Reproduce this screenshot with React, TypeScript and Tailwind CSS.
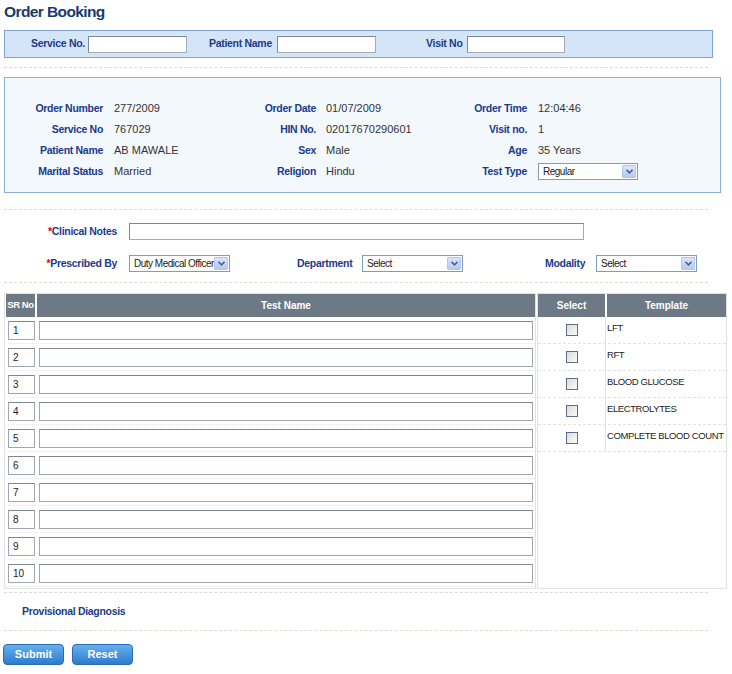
import React from 'react'

const label = "font-bold text-[10.5px] tracking-[-0.3px] text-[#1b3a8c] whitespace-nowrap"
const value = "text-[11px] text-[#333] whitespace-nowrap"

const TextBox = ({ w }: { w: string }) => (
  <div className={`${w} h-[17px] bg-white border border-[#a4acb3] border-t-[#7d8992] border-l-[#7d8992]`} />
)

// old xp style dropdown
const Dropdown = ({ w, text }: { w: string; text: string }) => (
  <div className={`${w} h-[17px] bg-white border border-[#7f9db9] flex items-center justify-between`}>
    <span className="pl-[4px] text-[10px] text-[#222] tracking-[-0.5px] whitespace-nowrap">{text}</span>
    <div className="shrink-0 w-[14px] h-[13px] mr-[1px] rounded-[1px] bg-gradient-to-b from-[#dbe6fd] to-[#b5c9f5] border border-[#b3c5ef] flex items-center justify-center">
      <svg width="7" height="5" viewBox="0 0 7 5">
        <path d="M0.5 0.8 L3.5 3.8 L6.5 0.8" fill="none" stroke="#4d6185" strokeWidth="1.6" />
      </svg>
    </div>
  </div>
)

const Divider = ({ className = '' }: { className?: string }) => (
  <div className={`ml-[4px] w-[704px] border-t border-dashed border-[#dcdcd4] ${className}`} />
)

const info = [
  ['Order Number', '277/2009', 'Order Date', '01/07/2009', 'Order Time', '12:04:46'],
  ['Service No', '767029', 'HIN No.', '02017670290601', 'Visit no.', '1'],
  ['Patient Name', 'AB MAWALE', 'Sex', 'Male', 'Age', '35 Years'],
  ['Marital Status', 'Married', 'Religion', 'Hindu', 'Test Type', ''],
]

const templates = ['LFT', 'RFT', 'BLOOD GLUCOSE', 'ELECTROLYTES', 'COMPLETE BLOOD COUNT']

export default function App() {
  return (
    <div className="w-[732px] h-[674px] bg-white font-['Liberation_Sans',sans-serif] overflow-hidden">
      <div className="h-[30px] pl-[4px] pt-[1px]">
        <h1 className="font-bold text-[15.5px] leading-[22px] tracking-[-0.6px] text-[#173b6f]">Order Booking</h1>
      </div>

      {/* search bar */}
      <div className="ml-[4px] w-[709px] h-[28px] bg-[#d5e5f8] border border-[#7fa3cf] flex items-center">
        <span className={`${label} ml-[26px] w-[57px]`}>Service No.</span>
        <TextBox w="w-[99px]" />
        <span className={`${label} ml-[22px] w-[68px]`}>Patient Name</span>
        <TextBox w="w-[99px]" />
        <span className={`${label} ml-[50px] w-[41px]`}>Visit No</span>
        <TextBox w="w-[98px]" />
      </div>

      <Divider className="mt-[9px]" />

      {/* patient info */}
      <div className="mt-[9px] ml-[4px] w-[717px] h-[116px] bg-[#f3f8fd] border border-[#8aaed6] pt-[20px]">
        {info.map((r, i) => (
          <div key={i} className="h-[21px] flex items-center">
            <span className={`${label} w-[98px] text-right`}>{r[0]}</span>
            <span className={`${value} w-[113px] pl-[11px]`}>{r[1]}</span>
            <span className={`${label} w-[100px] text-right`}>{r[2]}</span>
            <span className={`${value} w-[108px] pl-[10px]`}>{r[3]}</span>
            <span className={`${label} w-[103px] text-right`}>{r[4]}</span>
            {r[4] === 'Test Type' ? (
              <div className="pl-[11px]"><Dropdown w="w-[100px]" text="Regular" /></div>
            ) : (
              <span className={`${value} pl-[11px]`}>{r[5]}</span>
            )}
          </div>
        ))}
      </div>

      <Divider className="mt-[16px]" />

      <div className="mt-[13px] flex items-center">
        <span className={`${label} w-[117px] text-right`}><span className="text-[#e0001b]">*</span>Clinical Notes</span>
        <div className="ml-[12px]"><TextBox w="w-[455px]" /></div>
      </div>

      <div className="mt-[15px] flex items-center">
        <span className={`${label} w-[117px] text-right`}><span className="text-[#e0001b]">*</span>Prescribed By</span>
        <div className="ml-[12px]"><Dropdown w="w-[101px]" text="Duty Medical Officer" /></div>
        <span className={`${label} ml-[67px] w-[65px]`}>Department</span>
        <Dropdown w="w-[101px]" text="Select" />
        <span className={`${label} ml-[82px] w-[51px]`}>Modality</span>
        <Dropdown w="w-[101px]" text="Select" />
      </div>

      <Divider className="mt-[10px]" />

      {/* tests */}
      <div className="mt-[10px] ml-[4px] flex">
        <div className="w-[532px] h-[296px] border border-[#e2e2e2] pl-[1px]">
          <div className="h-[23px] flex gap-[2px]">
            <div className="w-[29px] bg-[#6d7a85] text-white font-bold text-[9.5px] tracking-[-0.4px] whitespace-nowrap flex items-center justify-center">SR No</div>
            <div className="flex-1 bg-[#6d7a85] text-white font-bold text-[10px] flex items-center justify-center">Test Name</div>
          </div>
          {Array.from({ length: 10 }, (_, i) => (
            <div key={i} className="h-[27px] flex items-center border-b border-dotted border-[#e6e6e6]">
              <div className="ml-[2px] w-[27px] h-[19px] border border-[#9ea8b0] border-t-[#7d8992] flex items-center pl-[4px] text-[10px] text-[#222]">{i + 1}</div>
              <div className="ml-[4px] w-[494px] h-[19px] border border-[#9ea8b0] border-t-[#7d8992] bg-white" />
            </div>
          ))}
        </div>

        <div className="ml-[1px] w-[190px] h-[296px] border border-[#e2e2e2]">
          <div className="h-[23px] flex gap-[2px]">
            <div className="w-[67px] bg-[#6d7a85] text-white font-bold text-[10px] flex items-center justify-center">Select</div>
            <div className="flex-1 bg-[#6d7a85] text-white font-bold text-[10px] flex items-center justify-center">Template</div>
          </div>
          {templates.map(t => (
            <div key={t} className="h-[27px] flex border-b border-dashed border-[#e2e2e2]">
              <div className="w-[68px] border-r border-[#e2e2e2] flex items-center justify-center">
                <div className="w-[12px] h-[12px] border border-[#5c6f86] bg-gradient-to-br from-[#dcdcd6] to-[#fbfbf9]" />
              </div>
              <div className="pl-[1px] flex items-center text-[9.5px] text-[#222] tracking-[-0.4px] whitespace-nowrap pb-[3px]">{t}</div>
            </div>
          ))}
        </div>
      </div>

      <Divider className="mt-[3px]" />
      <div className="h-[37px] flex items-center pl-[22px]">
        <span className={label}>Provisional Diagnosis</span>
      </div>
      <Divider />

      <div className="mt-[13px] ml-[3px] flex gap-[8px]">
        <button className="w-[61px] h-[21px] rounded-[4px] border border-[#2a6db5] bg-gradient-to-b from-[#64b0ee] to-[#2d7ccc] text-white font-bold text-[11px]">Submit</button>
        <button className="w-[61px] h-[21px] rounded-[4px] border border-[#2a6db5] bg-gradient-to-b from-[#64b0ee] to-[#2d7ccc] text-white font-bold text-[11px]">Reset</button>
      </div>
    </div>
  )
}
